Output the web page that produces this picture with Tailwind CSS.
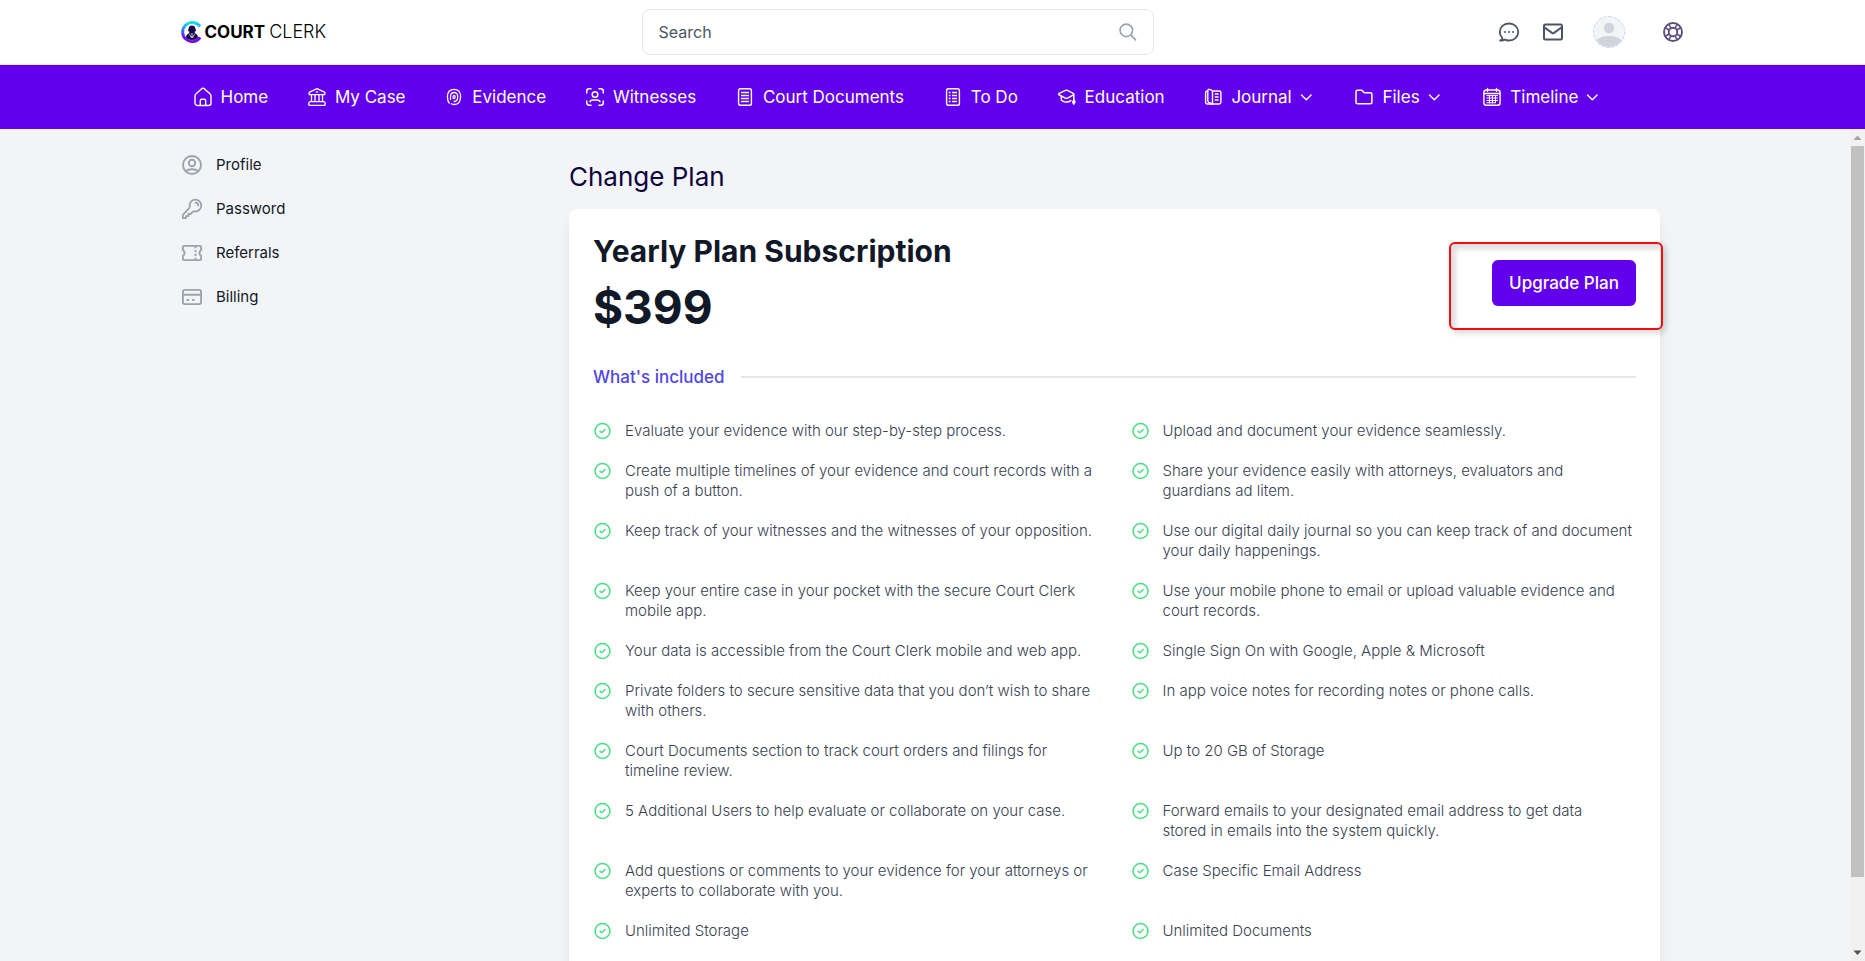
<!DOCTYPE html>
<html lang="en">
<head>
<meta charset="utf-8">
<meta name="viewport" content="width=device-width, initial-scale=1">
<title>Court Clerk - Change Plan</title>
<script src="https://cdn.jsdelivr.net/npm/@tailwindcss/browser@4"></script>
</head>
<body class="flex h-screen flex-col overflow-hidden bg-[#f3f4f6] font-['Inter','Open_Sans',sans-serif] text-[#111827]">

<header class="h-[65px] shrink-0 border-b border-gray-200 bg-white">
  <div class="mx-auto flex h-full max-w-[1536px] items-center px-4">
    <a href="#" class="flex w-[461px] items-center gap-[2px] text-black" aria-label="Court Clerk">
      <svg class="size-[22px]" viewBox="0 0 22 22" fill="none">
        <defs><linearGradient id="ring" x1="0" y1="0" x2="0" y2="1"><stop offset="0" stop-color="#0fe3f5"/><stop offset=".45" stop-color="#3a6bf6"/><stop offset=".8" stop-color="#6a0cf2"/><stop offset="1" stop-color="#7a08e8"/></linearGradient></defs>
        <path d="M19 5.3A9.6 9.6 0 1 0 19.2 16.4" stroke="url(#ring)" stroke-width="2.9"/>
        <path d="M11 4.6c-2.3 0-3.4 1.5-3.4 3.2 0 .6-.6.9-.6 1.6 0 .9 1 .9 1.5 1.4L8 12.2c-1.800.7-2.900 2-3 4.300C6.500 18.200 8.600 19 11 19s4.500-.8 6-2.500c-.1-2.300-1.200-3.600-3-4.300l-.5-1.400c.5-.5 1.500-.5 1.500-1.400 0-.7-.6-1-.6-1.600 0-1.700-1.100-3.200-3.400-3.200z" fill="#140a46"/>
        <path d="M8.300 12.600 10.500 17M13.700 12.600 11.500 17" stroke="#fff" stroke-width=".7"/><path d="m11 12-.9.8.6.7-.5 3 .8.800.8-.8-.5-3 .6-.7z" fill="#d9d6ea"/>
      </svg>
      <span class="flex gap-1 text-[17px] leading-6"><span class="font-bold">COURT</span><span class="text-lg leading-6 font-light">CLERK</span></span>
    </a>
    <form class="relative w-full max-w-lg" onsubmit="return false">
      <input type="text" aria-label="Search" placeholder="Search" class="h-[46px] w-full rounded-lg border border-gray-200 bg-white pr-12 pl-4 text-base outline-none placeholder:text-[#4b5563]">
      <button type="submit" aria-label="Submit search" class="absolute top-[13px] right-4 text-[#9ca3af]">
        <svg class="size-5" viewBox="0 0 24 24" fill="none" stroke="currentColor" stroke-width="2" stroke-linecap="round"><circle cx="10" cy="10" r="7.500"/><path d="m15.500 15.500 5.500 6"/></svg>
      </button>
    </form>
    <div class="ml-auto flex items-center text-[#4b5563]">
      <button type="button" aria-label="Chat"><svg class="size-6" viewBox="0 0 24 24" fill="none" stroke="currentColor" stroke-width="1.800" stroke-linecap="round" stroke-linejoin="round"><path d="M12 20.500c5.200 0 9.200-3.600 9.200-8.500s-4-8.500-9.200-8.500S2.800 7.100 2.800 12c0 2.200.9 4.200 2.400 5.800.3.400.2 1-.1 1.500-.5.700-1.200 1.100-2 1.200 1.600.3 3.200 0 4.500-.9 1.300.6 2.800.9 4.400.9z"/><path d="M8 12h.01M12 12h.01M16 12h.01" stroke-width="2"/></svg></button>
      <button type="button" aria-label="Mail" class="ml-5"><svg class="size-6" viewBox="0 0 24 24" fill="none" stroke="currentColor" stroke-width="2" stroke-linecap="round" stroke-linejoin="round"><rect x="3" y="4.500" width="18" height="15" rx="1.500"/><path d="m3.500 7.500 7.500 5.400c.6.400 1.400.4 2 0l7.500-5.400"/></svg></button>
      <button type="button" aria-label="Account" class="ml-7 size-8 overflow-hidden rounded-full border border-dashed border-indigo-200 bg-gray-100"><svg class="size-full" viewBox="0 0 30 30" fill="#d1d5db"><circle cx="15" cy="11" r="5.200"/><path d="M0 26c3-4.500 8.500-7 15-7s12 2.500 15 7v6H0z"/></svg></button>
      <button type="button" aria-label="Support" class="ml-9 text-[#5b4f7d]"><svg class="size-6" viewBox="0 0 24 24" fill="none" stroke="currentColor" stroke-width="1.900"><circle cx="12" cy="12" r="9"/><circle cx="12" cy="12" r="4.300"/><path d="M7.500 4.200 10 8M4.200 7.500 8 10M16.500 4.200 14 8M19.800 7.500 16 10M7.500 19.800 10 16M4.200 16.500 8 14M16.500 19.800 14 16M19.800 16.500 16 14" stroke-width="1.500"/></svg></button>
    </div>
  </div>
</header>

<nav aria-label="Main" class="h-16 shrink-0 bg-[#6200ee] text-white">
  <div class="mx-auto h-full max-w-[1536px] pr-[98px] pl-7">
    <ul class="flex h-full items-center justify-between text-[17px] leading-6">
      <li><a href="#" class="flex items-center gap-2"><svg class="size-5" viewBox="0 0 20 20" fill="none" stroke="currentColor" stroke-width="1.400" stroke-linejoin="round"><path d="M2 9.200c0-1 .4-1.800 1.100-2.400l5-4.600a2.800 2.800 0 0 1 3.800 0l5 4.600c.7.600 1.100 1.400 1.100 2.400V16a2.500 2.500 0 0 1-2.500 2.500h-11A2.500 2.500 0 0 1 2 16z"/><path d="M7.300 18.300v-4.600c0-.9.600-1.500 1.500-1.500h2.400c.9 0 1.500.6 1.500 1.500v4.600"/></svg>Home</a></li>
      <li><a href="#" class="flex items-center gap-2"><svg class="size-5" viewBox="0 0 20 20" fill="none" stroke="currentColor" stroke-width="1.300" stroke-linejoin="round"><path d="m10 1.700 7.300 3.500c.4.200.6.500.6.900v.8c0 .5-.3.800-.8.800H2.900c-.5 0-.8-.3-.8-.8v-.8c0-.4.200-.7.600-.9z"/><path d="M4.500 7.700v6.800M8 7.700v6.800M12 7.700v6.800M15.500 7.700v6.800"/><path d="M3.500 14.600h13c.9 0 1.700.8 1.700 1.700v1.300c0 .4-.3.700-.7.700h-15c-.4 0-.7-.3-.7-.7v-1.300c0-.9.800-1.700 1.700-1.700z"/><path d="M8.800 5h2.400"/></svg>My Case</a></li>
      <li><a href="#" class="flex items-center gap-2"><svg class="size-5" viewBox="0 0 20 20" fill="none" stroke="currentColor" stroke-width="1.300" stroke-linecap="round"><path d="M5.200 16C3.800 14.500 3.400 12.500 3.400 9.500 3.400 5.200 6 2.300 10 2.300s6.600 2.900 6.600 7.200c0 5-2.400 8-6.300 8-1.200 0-2.200-.2-3-.7"/><path d="M6.500 12.500V9.500c0-2.600 1.400-4 3.500-4s3.700 1.400 3.700 4c0 3.500-1 5-3.500 5"/><path d="M9.200 11.500v-2c0-.8.300-1.200.9-1.200s1 .4 1 1.200-.1 1.700-.6 2"/></svg>Evidence</a></li>
      <li><a href="#" class="flex items-center gap-2"><svg class="size-5" viewBox="0 0 20 20" fill="none" stroke="currentColor" stroke-width="1.500" stroke-linecap="round"><path d="M1.700 6V4.200c0-1.400 1.100-2.500 2.500-2.500H6M14 1.700h1.800c1.400 0 2.500 1.100 2.500 2.500V6M18.300 14v1.800c0 1.400-1.100 2.500-2.500 2.500H14M6 18.300H4.200a2.500 2.500 0 0 1-2.500-2.500V14"/><circle cx="10" cy="7.500" r="2.800"/><path d="M5 14.700c.5-1 1.500-1.600 2.800-1.600h4.400c1.300 0 2.300.6 2.800 1.600"/></svg>Witnesses</a></li>
      <li><a href="#" class="flex items-center gap-2"><svg class="size-5" viewBox="0 0 20 20" fill="none" stroke="currentColor" stroke-width="1.400"><rect x="3.600" y="1.700" width="12.800" height="16.600" rx="1.800"/><path d="M6 5.500h8M6 8.500h8M6 11.500h8M6 14.500h8"/></svg>Court Documents</a></li>
      <li><a href="#" class="flex items-center gap-2"><svg class="size-5" viewBox="0 0 20 20" fill="none" stroke="currentColor" stroke-width="1.400"><rect x="3.600" y="1.700" width="12.800" height="16.600" rx="1.800"/><path d="M5.800 5.500h1.800M9 5.500h5M5.800 8.500h1.800M9 8.500h5M5.800 11.500h1.800M9 11.500h5M5.800 14.500h1.800M9 14.500h5"/></svg>To Do</a></li>
      <li><a href="#" class="flex items-center gap-2"><svg class="size-5" viewBox="0 0 20 20" fill="none" stroke="currentColor" stroke-width="1.500" stroke-linejoin="round" stroke-linecap="round"><path d="M1.800 6.700 8.400 3.400a2.200 2.200 0 0 1 2 0l6.200 3.300v1.200l-6.200 3.300a2.200 2.200 0 0 1-2 0L1.800 7.700z"/><path d="M4.300 9.500v3c0 .8 2.200 2.600 5.100 2.600 2 0 3.500-.7 4.400-1.500M16.800 8v5"/><path d="m16.800 13 1.200 2-1.200 2.200-1.100-2.200z" fill="currentColor"/></svg>Education</a></li>
      <li><button type="button" class="flex items-center gap-2"><svg class="size-5" viewBox="0 0 20 20" fill="none" stroke="currentColor" stroke-width="1.400" stroke-linejoin="round"><path d="M9.500 4h6.700c1 0 1.700.7 1.700 1.700v9.600c0 1-.7 1.700-1.700 1.700H4.300c-1 0-1.700-.7-1.700-1.700V5.700c0-.8.500-1.500 1.300-1.700"/><path d="M4.800 3.600c0-1 .8-1.700 1.700-1.300l2 .8c.6.200 1 .8 1 1.500V17l-3.300-1.400c-.8-.3-1.400-1-1.400-1.900z"/><path d="M11.800 7h3.800M11.800 10h3.800M11.800 13h3.800"/></svg>Journal<svg class="-ml-1 size-5" viewBox="0 0 20 20" fill="none" stroke="currentColor" stroke-width="1.400" stroke-linecap="round" stroke-linejoin="round"><path d="m5.500 8 4.800 4.800L15.100 8"/></svg></button></li>
      <li><button type="button" class="flex items-center gap-2"><svg class="size-5" viewBox="0 0 20 20" fill="none" stroke="currentColor" stroke-width="1.500" stroke-linejoin="round"><path d="M2 4.800c0-.9.700-1.600 1.600-1.600h3.600c.5 0 .9.200 1.200.6l1.100 1.300c.3.400.7.600 1.200.6h5.600c.9 0 1.600.7 1.600 1.600v7.900c0 .9-.7 1.600-1.600 1.600H3.600c-.9 0-1.600-.7-1.600-1.600z"/></svg>Files<svg class="-ml-1 size-5" viewBox="0 0 20 20" fill="none" stroke="currentColor" stroke-width="1.400" stroke-linecap="round" stroke-linejoin="round"><path d="m5.500 8 4.800 4.800L15.100 8"/></svg></button></li>
      <li><button type="button" class="flex items-center gap-2"><svg class="size-5" viewBox="0 0 20 20" fill="none" stroke="currentColor" stroke-width="1.400" stroke-linecap="round"><rect x="1.900" y="3" width="16.200" height="15.300" rx="2.500"/><path d="M2 6.500h16M5.500 1.500v2.800M14.500 1.500v2.800"/><path d="M7.500 8.800v7M10.500 8.800v7M13.500 8.800v7M4.800 11h10.700M4.800 13.500h10.700M4.800 8.600h10.700M4.800 15.800h8" stroke-width="1"/></svg>Timeline<svg class="-ml-1 size-5" viewBox="0 0 20 20" fill="none" stroke="currentColor" stroke-width="1.400" stroke-linecap="round" stroke-linejoin="round"><path d="m5.500 8 4.800 4.800L15.100 8"/></svg></button></li>
    </ul>
  </div>
</nav>

<div class="flex min-h-0 flex-1">
  <div class="min-w-0 flex-1 overflow-hidden">
    <div class="mx-auto flex max-w-[1536px] pr-[33px] pl-6">
      <nav aria-label="Settings" class="w-[388px] shrink-0 pt-[14px]">
        <ul class="text-[15px] leading-5">
          <li><a href="#" class="flex h-11 items-center gap-3"><svg class="-ml-[1px] size-6 text-[#9ca3af]" viewBox="0 0 24 24" fill="none" stroke="currentColor" stroke-width="1.900"><circle cx="12" cy="12" r="9"/><circle cx="12" cy="10" r="3.200"/><path d="M5.800 18.300c1.500-1.400 3.700-2.100 6.200-2.100s4.700.7 6.200 2.100"/></svg>Profile</a></li>
          <li><a href="#" class="flex h-11 items-center gap-3"><svg class="-ml-[1px] size-6 text-[#9ca3af]" viewBox="0 0 24 24" fill="none" stroke="currentColor" stroke-width="1.800" stroke-linecap="round" stroke-linejoin="round"><path d="M15.500 5.700a3 3 0 0 1 2.800 2.800M21.200 8.500a6 6 0 0 1-6.900 5.900c-.6-.1-1.200 0-1.600.4L10.500 17H8.300v2.200H6v2H2.800v-2.500c0-.6.200-1.200.7-1.600l5.800-6c.4-.4.500-1 .4-1.600A5.800 5.800 0 1 1 21.200 8.500z"/></svg>Password</a></li>
          <li><a href="#" class="flex h-11 items-center gap-3"><svg class="-ml-[1px] size-6 text-[#9ca3af]" viewBox="0 0 24 24" fill="none" stroke="currentColor" stroke-width="1.900" stroke-linejoin="round"><path d="M4 4.900h16c.6 0 1.100.5 1.100 1.100v3.200a3.200 3.200 0 0 0 0 5.600V18c0 .6-.5 1.100-1.100 1.100H4c-.6 0-1.100-.5-1.100-1.100v-3.200a3.200 3.200 0 0 0 0-5.600V6c0-.6.500-1.100 1.100-1.100z"/><path d="M15.500 5v2.300M15.500 9v2.200M15.500 12.800V15M15.500 16.700V19"/></svg>Referrals</a></li>
          <li><a href="#" class="flex h-11 items-center gap-3"><svg class="-ml-[1px] size-6 text-[#9ca3af]" viewBox="0 0 24 24" fill="none" stroke="currentColor" stroke-width="1.900"><rect x="2.900" y="4.900" width="18.200" height="14.200" rx="2"/><path d="M3 9.700h18M6.500 15H9M12 15h2.500"/></svg>Billing</a></li>
        </ul>
      </nav>

      <main class="min-w-0 flex-1 pt-8">
        <h1 class="text-[26px] leading-8 text-[#0d0440]">Change Plan</h1>
        <section class="mt-4 rounded-lg bg-white px-6 pt-6 pb-12 shadow-lg">
          <div class="flex items-center justify-between">
            <div>
              <h2 class="text-3xl leading-9 font-bold">Yearly Plan Subscription</h2>
              <p class="mt-3 text-[46px] leading-[52px] font-bold">$399</p>
            </div>
            <div class="relative">
              <button type="button" class="h-[46px] w-36 rounded-md bg-[#6200ee] text-[17px] leading-6 font-medium text-white">Upgrade Plan</button>
              <span class="pointer-events-none absolute -top-[18px] -right-[27px] -bottom-6 -left-[43px] rounded-md border-2 border-[#f40b0b] shadow-[3px_3px_6px_rgba(0,0,0,0.16),inset_5px_5px_5px_rgba(0,0,0,0.13)]"></span>
            </div>
          </div>
          <div class="mt-8 flex items-center gap-4">
            <h3 class="text-[17px] leading-6 font-medium text-[#4f46e5]">What's included</h3>
            <div class="h-[2px] flex-1 bg-gray-200"></div>
          </div>
          <ul id="features" class="mt-8 grid grid-cols-2 gap-x-8 gap-y-5 text-[15px] leading-5 font-light text-[#374151]"></ul>
        </section>
      </main>
    </div>
  </div>

  <div aria-hidden="true" class="flex w-[15px] shrink-0 flex-col items-center bg-[#f1f1f1]">
    <svg class="h-[17px] w-[9px] text-[#a3a3a3]" viewBox="0 0 9 17" fill="currentColor"><path d="M4.500 6.500 8.500 11h-8z"/></svg>
    <div class="w-[13px] flex-1 bg-[#c1c1c1]"></div>
    <div class="h-[67px]"></div>
    <svg class="h-[17px] w-[9px] text-[#505050]" viewBox="0 0 9 17" fill="currentColor"><path d="M4.500 11 .5 6.500h8z"/></svg>
  </div>
</div>

<script>
const features = [
  "Evaluate your evidence with our step-by-step process.",
  "Upload and document your evidence seamlessly.",
  "Create multiple timelines of your evidence and court records with a push of a button.",
  "Share your evidence easily with attorneys, evaluators and guardians&nbsp;ad&nbsp;litem.",
  "Keep track of your witnesses and the witnesses of your opposition.",
  "Use our digital daily journal so you can keep track of and document your daily happenings.",
  "Keep your entire case in your pocket with the secure Court Clerk mobile app.",
  "Use your mobile phone to email or upload valuable evidence and court records.",
  "Your data is accessible from the Court Clerk mobile and web app.",
  "Single Sign On with Google, Apple &amp; Microsoft",
  "Private folders to secure sensitive data that you don’t wish to share with others.",
  "In app voice notes for recording notes or phone calls.",
  "Court Documents section to track court orders and filings for timeline review.",
  "Up to 20 GB of Storage",
  "5 Additional Users to help evaluate or collaborate on your case.",
  "Forward emails to your designated email address to get data stored&nbsp;in&nbsp;emails into the system quickly.",
  "Add questions or comments to your evidence for your attorneys or experts to collaborate with you.",
  "Case Specific Email Address",
  "Unlimited Storage",
  "Unlimited Documents"
];
document.getElementById("features").innerHTML = features.map(text => `
  <li class="flex items-start gap-3">
    <svg class="size-5 shrink-0 text-[#4ade80]" viewBox="0 0 20 20" fill="none" stroke="currentColor" stroke-width="1.500" stroke-linecap="round" stroke-linejoin="round"><circle cx="9.500" cy="10" r="7.500"/><path d="m7 10.200 1.700 1.600 3.400-3.300"/></svg>
    <span>${text}</span>
  </li>`).join("");
</script>
</body>
</html>
